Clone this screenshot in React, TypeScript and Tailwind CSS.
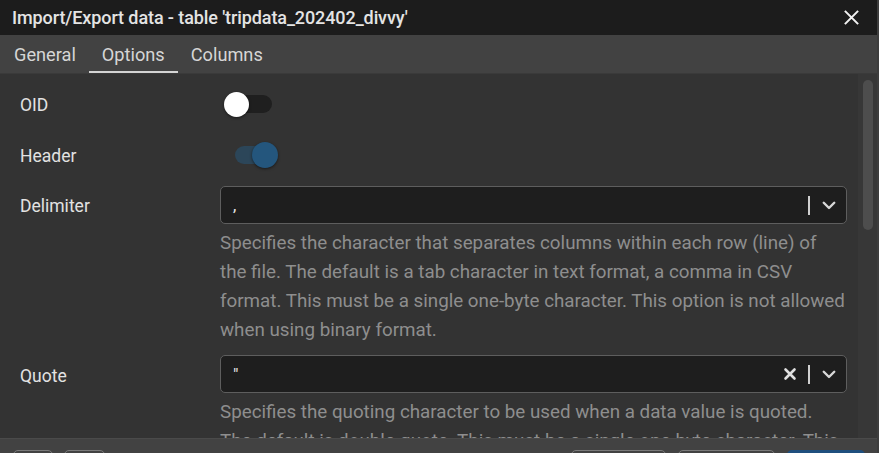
import React from "react";

const font = { fontFamily: "Roboto, 'Noto Sans', sans-serif" };

function Chevron() {
  return (
    <svg width="18" height="18" viewBox="0 0 24 24" fill="none" stroke="#d8d8d8" strokeWidth="3.2" strokeLinecap="round" strokeLinejoin="round">
      <path d="M5 9l7 7 7-7" />
    </svg>
  );
}

function ClearX() {
  return (
    <svg width="14" height="14" viewBox="0 0 14 14" fill="none" stroke="#e0e0e0" strokeWidth="2.6" strokeLinecap="round">
      <path d="M2.5 2.5l9 9M11.5 2.5l-9 9" />
    </svg>
  );
}

function Select({ value, clearable }: { value: string; clearable?: boolean }) {
  return (
    <div className="h-[38px] w-[627px] rounded-[5px] border border-[#5e5e5e] bg-[#1e1e1e] flex items-center pl-[12px] pr-[8px]">
      <span className="flex-1 text-[17px] text-[#e8e8e8] leading-none">{value}</span>
      {clearable && (
        <span className="mr-[11px] flex items-center">
          <ClearX />
        </span>
      )}
      <span className="w-[2px] h-[19px] bg-[#d0d0d0] mr-[10px]" />
      <Chevron />
    </div>
  );
}

function Toggle({ on }: { on: boolean }) {
  if (on) {
    return (
      <div className="relative w-[48px] h-[26px] ml-[12px]">
        <div className="absolute left-[3px] top-[4px] w-[42px] h-[18px] rounded-full bg-[#2c4659]" />
        <div className="absolute left-[20px] top-0 w-[26px] h-[26px] rounded-full bg-[#24567d] shadow-[0_1px_3px_rgba(0,0,0,0.5)]" />
      </div>
    );
  }
  return (
    <div className="relative w-[50px] h-[26px] ml-[4px]">
      <div className="absolute left-[4px] top-[4px] w-[44px] h-[18px] rounded-full bg-[#1f1f1f]" />
      <div className="absolute left-0 top-[1px] w-[25px] h-[25px] rounded-full bg-white shadow-[0_1px_3px_rgba(0,0,0,0.5)]" />
    </div>
  );
}

function Desc({ lines }: { lines: string[] }) {
  return (
    <div className="ml-[200px] mt-[5px] w-[627px] text-[18.8px] leading-[29px] text-[#8e8e8e]">
      {lines.map((l, i) => (
        <div key={i} className="whitespace-nowrap">
          {l}
        </div>
      ))}
    </div>
  );
}

export default function App() {
  return (
    <div className="w-[879px] h-[453px] overflow-hidden flex flex-col bg-[#333333] border-r-2 border-[#3d3d3d]" style={font}>
      {/* Title bar */}
      <div className="h-[35px] shrink-0 bg-[#1c1c1c] flex items-center pl-[12px] pr-[18px]">
        <span className="flex-1 text-[18px] font-medium text-[#e4e4e4] tracking-[-0.1px] leading-none">
          Import/Export data - table 'tripdata_202402_divvy'
        </span>
        <svg width="15" height="15" viewBox="0 0 14 14" fill="none" stroke="#f2f2f2" strokeWidth="1.9" strokeLinecap="square">
          <path d="M1.5 1.5l11 11M12.5 1.5l-11 11" />
        </svg>
      </div>

      {/* Tabs */}
      <div className="h-[39px] shrink-0 bg-[#424242] flex items-stretch pl-[1px] border-b border-[#3a3a3a]">
        <div className="px-[13px] flex items-center text-[18.2px] text-[#d6d6d6] pt-[2px]">General</div>
        <div className="px-[13px] flex items-center text-[18.2px] text-[#d6d6d6] relative pt-[2px]">
          Options
          <div className="absolute left-0 right-0 bottom-[0px] h-[2px] bg-[#d4d4d4]" />
        </div>
        <div className="px-[13px] flex items-center text-[18.2px] text-[#d6d6d6] pt-[2px]">Columns</div>
      </div>

      {/* Content */}
      <div className="flex-1 min-h-0 flex">
        <div className="flex-1 overflow-hidden pt-[11px] pl-[20px] pr-[11px]">
          <div className="flex items-center h-[38px]">
            <div className="w-[200px] text-[17.5px] text-[#e2e2e2] pt-[2px]">OID</div>
            <Toggle on={false} />
          </div>
          <div className="flex items-center h-[38px] mt-[13px]">
            <div className="w-[200px] text-[17.5px] text-[#e2e2e2] pt-[2px]">Header</div>
            <Toggle on />
          </div>
          <div className="flex items-center h-[38px] mt-[12px]">
            <div className="w-[200px] text-[17.5px] text-[#e2e2e2] pt-[2px]">Delimiter</div>
            <Select value="," />
          </div>
          <Desc
            lines={[
              "Specifies the character that separates columns within each row (line) of",
              "the file. The default is a tab character in text format, a comma in CSV",
              "format. This must be a single one-byte character. This option is not allowed",
              "when using binary format.",
            ]}
          />
          <div className="flex items-center h-[38px] mt-[10px]">
            <div className="w-[200px] text-[17.5px] text-[#e2e2e2] pt-[4px]">Quote</div>
            <Select value={'"'} clearable />
          </div>
          <Desc
            lines={[
              "Specifies the quoting character to be used when a data value is quoted.",
              "The default is double-quote. This must be a single one-byte character. This",
            ]}
          />
        </div>
        {/* Scrollbar */}
        <div className="w-[19px] shrink-0 bg-[#373737] pt-[6px] flex justify-center">
          <div className="w-[10px] h-[150px] rounded-full bg-[#4d4d4d]" />
        </div>
      </div>

      {/* Footer */}
      <div className="h-[15px] shrink-0 bg-[#424242] border-t border-[#4a4a4a] flex items-start pt-[11px] pl-[13px] pr-[12px]">
        <div className="w-[40px] h-[20px] rounded-[5px] border border-[#7a7a7a]" />
        <div className="w-[41px] h-[20px] rounded-[5px] border border-[#7a7a7a] ml-[11px]" />
        <div className="flex-1" />
        <div className="w-[95px] h-[20px] rounded-[5px] border border-[#7a7a7a]" />
        <div className="w-[97px] h-[20px] rounded-[5px] border border-[#7a7a7a] ml-[12px]" />
        <div className="w-[78px] h-[20px] rounded-[5px] bg-[#1f4f7e] ml-[12px]" />
      </div>
    </div>
  );
}
